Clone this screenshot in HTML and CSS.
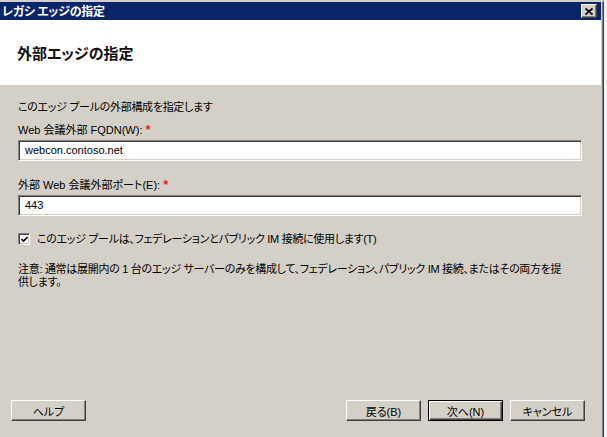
FILE: index.html
```html
<!DOCTYPE html>
<html lang="ja">
<head>
<meta charset="utf-8">
<title>レガシ エッジの指定</title>
<link rel="stylesheet" href="styles.css">
</head>
<body>
<div class="window">
  <div class="titlebar">
    <span class="title">レガシ エッジの指定</span>
    <span class="close"><svg width="8" height="7" viewBox="0 0 8 7"><path d="M0.5 0.5 L7.5 6.5 M7.5 0.5 L0.5 6.5" stroke="#000" stroke-width="1.8" fill="none"/></svg></span>
  </div>
  <div class="header">
    <h1 class="heading">外部エッジの指定</h1>
  </div>
  <div class="content">
    <p class="intro">このエッジ プールの外部構成を指定します</p>
    <label class="label label-first">Web 会議外部 FQDN(W): <span class="req">*</span></label>
    <div class="input">webcon.contoso.net</div>
    <label class="label label-second">外部 Web 会議外部ポート(E): <span class="req">*</span></label>
    <div class="input">443</div>
    <div class="check-row">
      <span class="checkbox"><svg width="7" height="7" viewBox="0 0 7 7"><path d="M0.5 3 L2.5 5 L6.5 1" stroke="#000" stroke-width="1.6" fill="none"/></svg></span>
      <span class="check-label">このエッジ プールは、フェデレーションとパブリック IM 接続に使用します(T)</span>
    </div>
    <p class="note">注意: 通常は展開内の 1 台のエッジ サーバーのみを構成して、フェデレーション、パブリック IM 接続、またはその両方を提<br>供します。</p>
  </div>
  <div class="footer">
    <span class="btn">ヘルプ</span>
    <span class="spacer"></span>
    <span class="btn">戻る(B)</span>
    <span class="btn btn-default">次へ(N)</span>
    <span class="btn">キャンセル</span>
  </div>
</div>
</body>
</html>
```

FILE: styles.css
```css
* { box-sizing: border-box; }
html, body { margin: 0; padding: 0; }
body {
  width: 607px;
  height: 437px;
  background: #f2f2f2;
  font-family: "Liberation Sans", "Noto Sans CJK JP", sans-serif;
  font-size: 11px;
  font-feature-settings: "palt";
  color: #000;
  overflow: hidden;
}
.window {
  width: 604px;
  height: 437px;
  background: #d4d0c8;
  border-top: 2px solid #d4d0c8;
  border-right: 1px solid #404040;
  box-shadow: inset -1px 0 0 #808080;
  display: flex;
  flex-direction: column;
}
.titlebar {
  height: 18px;
  margin-right: 2px;
  background: #0a246a;
  display: flex;
  align-items: center;
  justify-content: space-between;
  padding: 0 4px 0 2px;
}
.title {
  color: #fff;
  font-weight: bold;
  font-size: 12px;
  line-height: 18px;
  letter-spacing: -0.3px;
  font-family: "Noto Sans CJK JP", sans-serif;
}
.close {
  width: 16px;
  height: 14px;
  background: #d4d0c8;
  border: 1px solid;
  border-color: #fff #404040 #404040 #fff;
  box-shadow: inset -1px -1px 0 #808080;
  display: flex;
  align-items: center;
  justify-content: center;
}
.header {
  height: 65px;
  margin-right: 2px;
  background: #fff;
  display: flex;
  align-items: center;
  padding-left: 17px;
}
.heading {
  margin: 0;
  font-family: "Noto Sans CJK JP", sans-serif;
  font-size: 15px;
  font-weight: bold;
  line-height: 20px;
  color: #111;
}
.content {
  flex: 1;
  padding: 16px 21px 0 18px;
}
.intro, .label, .note, .check-label {
  display: block;
  margin: 0;
  line-height: 13px;
}
.intro, .note, .check-label { letter-spacing: -0.3px; }
.label-first { margin-top: 10px; }
.label-second { margin-top: 18px; }
.req {
  color: #e8231b;
  font-weight: bold;
  font-size: 13px;
  line-height: 0;
}
.input {
  margin-top: 3px;
  height: 21px;
  background: #fff;
  border: 1px solid;
  border-color: #808080 #fff #fff #808080;
  box-shadow: inset 1px 1px 0 #404040, inset -1px -1px 0 #d4d0c8;
  padding: 0 6px;
  line-height: 19px;
}
.check-row {
  margin-top: 16px;
  display: flex;
  align-items: center;
  gap: 7px;
  height: 14px;
}
.checkbox {
  width: 12px;
  height: 12px;
  background: #fff;
  border: 1px solid;
  border-color: #808080 #fff #fff #808080;
  box-shadow: inset 1px 1px 0 #404040, inset -1px -1px 0 #d4d0c8;
  display: flex;
  align-items: center;
  justify-content: center;
}
.note { margin-top: 17px; }
.footer {
  display: flex;
  gap: 7px;
  padding: 0 18px 16px 11px;
}
.spacer { flex: 1; }
.btn {
  width: 75px;
  height: 21px;
  background: #d4d0c8;
  border: 1px solid;
  border-color: #fff #404040 #404040 #fff;
  box-shadow: inset -1px -1px 0 #808080;
  display: flex;
  align-items: center;
  justify-content: center;
  font-family: "Liberation Sans", "Noto Sans CJK JP", sans-serif;
}
.btn-default {
  border: 1px solid #000;
  box-shadow: inset 1px 1px 0 #fff, inset -1px -1px 0 #404040, inset -2px -2px 0 #808080;
}
```
